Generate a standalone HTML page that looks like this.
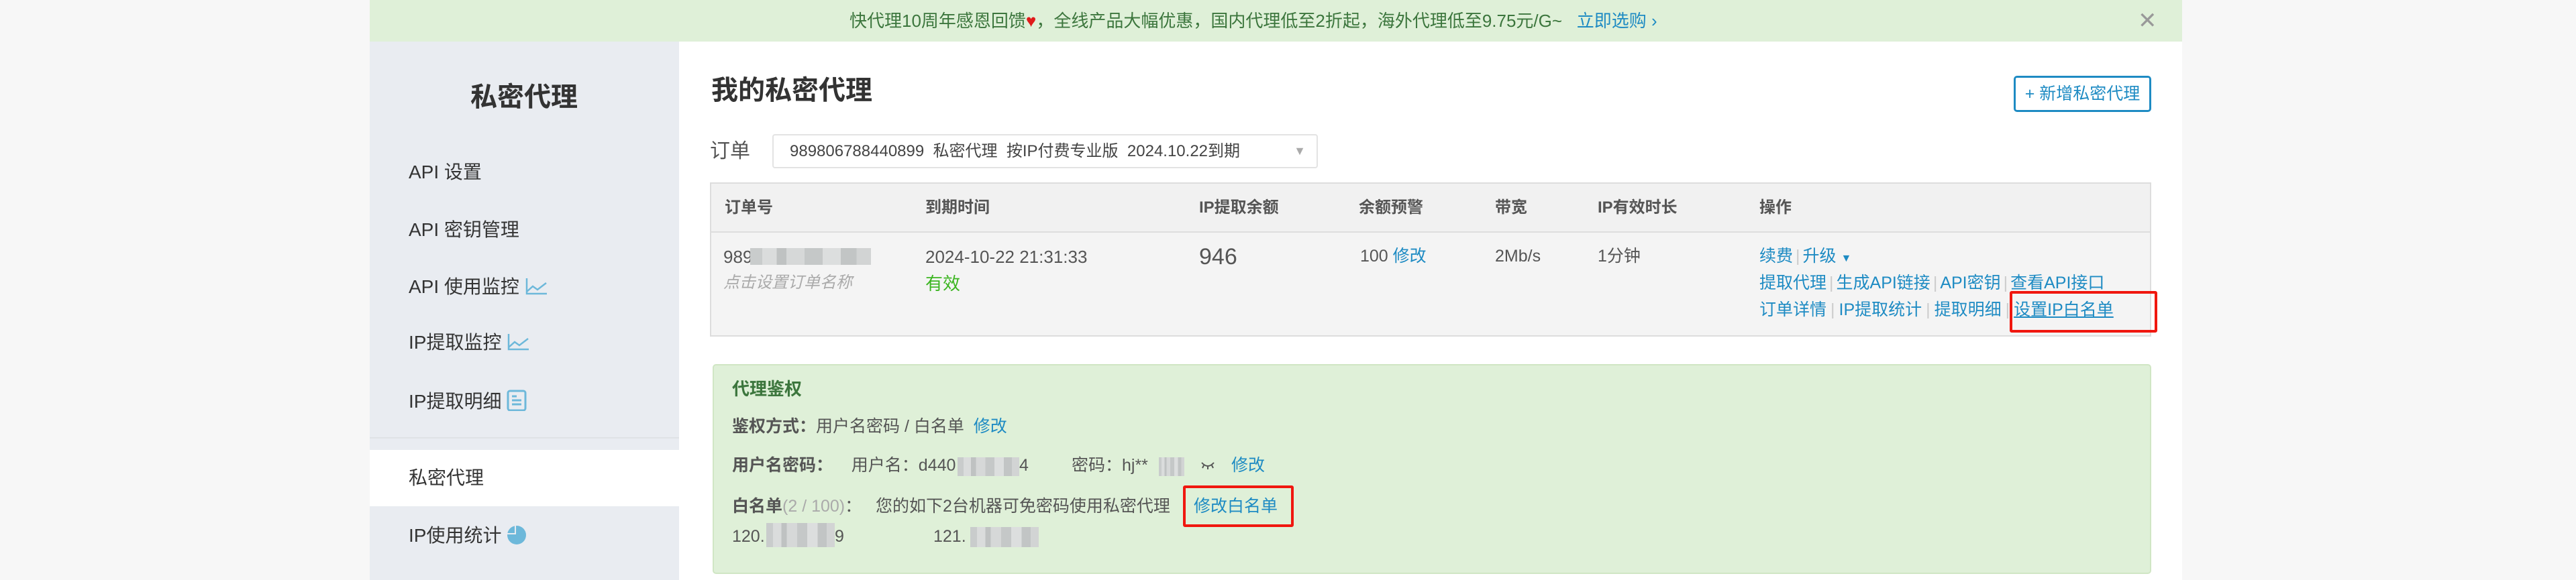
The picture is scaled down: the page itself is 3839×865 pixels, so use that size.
<!DOCTYPE html>
<html><head><meta charset="utf-8"><style>
*{margin:0;padding:0;box-sizing:border-box}
body{width:3839px;height:865px;overflow:hidden;background:#f7f7f7;font-family:"Liberation Sans","Noto Sans CJK SC",sans-serif;color:#555;position:relative}
.a{position:absolute;white-space:nowrap;line-height:1}
.blue{color:#1e8bc3}
.b{font-weight:bold}
.blur{position:absolute;background:linear-gradient(90deg,#c9cccc 0 10%,#dadcdc 10% 22%,#bfc2c2 22% 30%,#d6d8d8 30% 45%,#c5c8c8 45% 60%,#dcdede 60% 75%,#c2c5c5 75% 88%,#d2d4d4 88%)}
.sep{color:#ccc;margin:0 4px}
</style></head><body>
<div class="a" style="left:551px;top:0;width:2701px;height:865px;background:#fff"></div>
<div class="a" style="left:551px;top:0;width:2701px;height:62px;background:#dff0d8"></div>
<div class="a" style="left:1266px;top:18px;font-size:26px;color:#3c763d">快代理10周年感恩回馈<span style="color:#e01b1b">♥</span>，全线产品大幅优惠，国内代理低至2折起，海外代理低至9.75元/G~&nbsp;&nbsp;&nbsp;<span class="blue">立即选购 ›</span></div>
<div class="a" style="left:3186px;top:14px;font-size:34px;color:#999">✕</div>
<div class="a" style="left:551px;top:62px;width:461px;height:803px;background:#e9ecf1"></div>
<div class="a b" style="left:701px;top:125px;font-size:40px;color:#333">私密代理</div>
<div class="a" style="left:609px;top:243px;font-size:28px;color:#333">API 设置</div>
<div class="a" style="left:609px;top:329px;font-size:28px;color:#333">API 密钥管理</div>
<div class="a" style="left:609px;top:413px;font-size:28px;color:#333">API 使用监控 <svg width="34" height="28" viewBox="0 0 34 28" style="vertical-align:-4px"><path d="M3 2V25H33M3 22L12 14L19 19L32 9" fill="none" stroke="#6db8da" stroke-width="2.5"/></svg></div>
<div class="a" style="left:609px;top:496px;font-size:28px;color:#333">IP提取监控 <svg width="34" height="28" viewBox="0 0 34 28" style="vertical-align:-4px"><path d="M3 2V25H33M3 22L12 14L19 19L32 9" fill="none" stroke="#6db8da" stroke-width="2.5"/></svg></div>
<div class="a" style="left:609px;top:581px;font-size:28px;color:#333">IP提取明细 <svg width="30" height="32" viewBox="0 0 30 32" style="vertical-align:-5px"><rect x="2" y="2" width="26" height="29" rx="3" fill="none" stroke="#6db8da" stroke-width="3"/><path d="M8 10H15M8 16H22M8 22H22" stroke="#6db8da" stroke-width="3"/></svg></div>
<div class="a" style="left:551px;top:652px;width:461px;height:2px;background:#dfe2e6"></div>
<div class="a" style="left:551px;top:671px;width:461px;height:84px;background:#fff"></div>
<div class="a" style="left:609px;top:699px;font-size:28px;color:#333">私密代理</div>
<div class="a" style="left:609px;top:783px;font-size:28px;color:#333">IP使用统计 <svg width="30" height="30" viewBox="0 0 30 30" style="vertical-align:-5px"><circle cx="15" cy="15" r="14" fill="#6db8da"/><path d="M13 1V13H1" fill="none" stroke="#e9ecf1" stroke-width="2"/></svg></div>
<div class="a b" style="left:1060px;top:115px;font-size:40px;color:#333">我的私密代理</div>
<div class="a" style="left:3001px;top:113px;width:205px;height:54px;border:3px solid #1e8bc3;border-radius:5px;font-size:25px;color:#1e8bc3;text-align:center;line-height:48px">+ 新增私密代理</div>
<div class="a" style="left:1058px;top:211px;font-size:30px;color:#555">订单</div>
<div class="a" style="left:1151px;top:200px;width:813px;height:51px;border:2px solid #e3e3e3;border-radius:4px;font-size:24px;color:#444;line-height:47px;padding-left:24px">989806788440899&nbsp; 私密代理&nbsp; 按IP付费专业版&nbsp; 2024.10.22到期<span style="position:absolute;right:16px;top:0;color:#aaa;font-size:18px">▼</span></div>
<div class="a" style="left:1058px;top:272px;width:2148px;height:230px;border:2px solid #ddd;background:#f4f4f4"></div>
<div class="a" style="left:1060px;top:274px;width:2144px;height:73px;background:#f1f1f1;border-bottom:2px solid #ddd"></div>
<div class="a b" style="left:1080px;top:298px;font-size:24px;color:#555">订单号</div>
<div class="a b" style="left:1379px;top:298px;font-size:24px;color:#555">到期时间</div>
<div class="a b" style="left:1787px;top:298px;font-size:24px;color:#555">IP提取余额</div>
<div class="a b" style="left:2025px;top:298px;font-size:24px;color:#555">余额预警</div>
<div class="a b" style="left:2228px;top:298px;font-size:24px;color:#555">带宽</div>
<div class="a b" style="left:2381px;top:298px;font-size:24px;color:#555">IP有效时长</div>
<div class="a b" style="left:2622px;top:298px;font-size:24px;color:#555">操作</div>
<div class="a" style="left:1078px;top:370px;font-size:26px;color:#555">989</div>
<div class="blur" style="left:1118px;top:370px;width:180px;height:25px"></div>
<div class="a" style="left:1078px;top:410px;font-size:24px;color:#aaa;font-style:italic">点击设置订单名称</div>
<div class="a" style="left:1379px;top:370px;font-size:26px;color:#555">2024-10-22 21:31:33</div>
<div class="a" style="left:1379px;top:410px;font-size:26px;color:#3cb521">有效</div>
<div class="a" style="left:1787px;top:366px;font-size:34px;color:#555">946</div>
<div class="a" style="left:2027px;top:370px;font-size:25px;color:#555">100 <span class="blue">修改</span></div>
<div class="a" style="left:2228px;top:370px;font-size:25px;color:#555">2Mb/s</div>
<div class="a" style="left:2381px;top:370px;font-size:25px;color:#555">1分钟</div>
<div class="a blue" style="left:2622px;top:370px;font-size:25px">续费<span class="sep">|</span>升级 <span style="font-size:16px">▼</span></div>
<div class="a blue" style="left:2622px;top:410px;font-size:25px">提取代理<span class="sep">|</span>生成API链接<span class="sep">|</span>API密钥<span class="sep">|</span>查看API接口</div>
<div class="a blue" style="left:2622px;top:450px;font-size:25px">订单详情<span class="sep" style="margin:0 6px">|</span>IP提取统计<span class="sep" style="margin:0 6px">|</span>提取明细<span class="sep" style="margin:0 6px">|</span><span style="text-decoration:underline">设置IP白名单</span></div>
<div class="a" style="left:2995px;top:434px;width:220px;height:62px;border:4px solid #f0170f;border-radius:3px"></div>
<div class="a" style="left:1062px;top:543px;width:2144px;height:313px;background:#dff0d8;border:2px solid #d0e6c4;border-radius:5px"></div>
<div class="a b" style="left:1091px;top:567px;font-size:26px;color:#3c763d">代理鉴权</div>
<div class="a" style="left:1091px;top:624px;font-size:25px;color:#555"><b>鉴权方式：</b>用户名密码 / 白名单&nbsp; <span class="blue">修改</span></div>
<div class="a" style="left:1091px;top:682px;font-size:25px;color:#555"><b>用户名密码：</b>&nbsp;&nbsp;&nbsp; 用户名：d440</div>
<div class="blur" style="left:1427px;top:682px;width:92px;height:28px"></div>
<div class="a" style="left:1519px;top:682px;font-size:25px;color:#555">4</div>
<div class="a" style="left:1597px;top:682px;font-size:25px;color:#555">密码：hj**</div>
<div class="blur" style="left:1727px;top:682px;width:38px;height:28px"></div>
<svg class="a" style="left:1789px;top:686px" width="22" height="16" viewBox="0 0 22 16"><path d="M2 4Q11 14 20 4M5 8L3 12M11 10V14M17 8L19 12" fill="none" stroke="#555" stroke-width="2"/></svg>
<div class="a blue" style="left:1835px;top:682px;font-size:25px">修改</div>
<div class="a" style="left:1091px;top:743px;font-size:25px;color:#555"><b>白名单</b><span style="color:#aaa">(2 / 100)</span>：&nbsp;&nbsp;&nbsp;您的如下2台机器可免密码使用私密代理 </div>
<div class="a blue" style="left:1779px;top:743px;font-size:25px">修改白名单</div>
<div class="a" style="left:1763px;top:724px;width:165px;height:62px;border:4px solid #f0170f;border-radius:3px"></div>
<div class="a" style="left:1091px;top:788px;font-size:25px;color:#555">120.</div>
<div class="blur" style="left:1142px;top:780px;width:102px;height:36px"></div>
<div class="a" style="left:1244px;top:788px;font-size:25px;color:#555">9</div>
<div class="a" style="left:1391px;top:788px;font-size:25px;color:#555">121.</div>
<div class="blur" style="left:1446px;top:786px;width:102px;height:30px"></div>
</body></html>
